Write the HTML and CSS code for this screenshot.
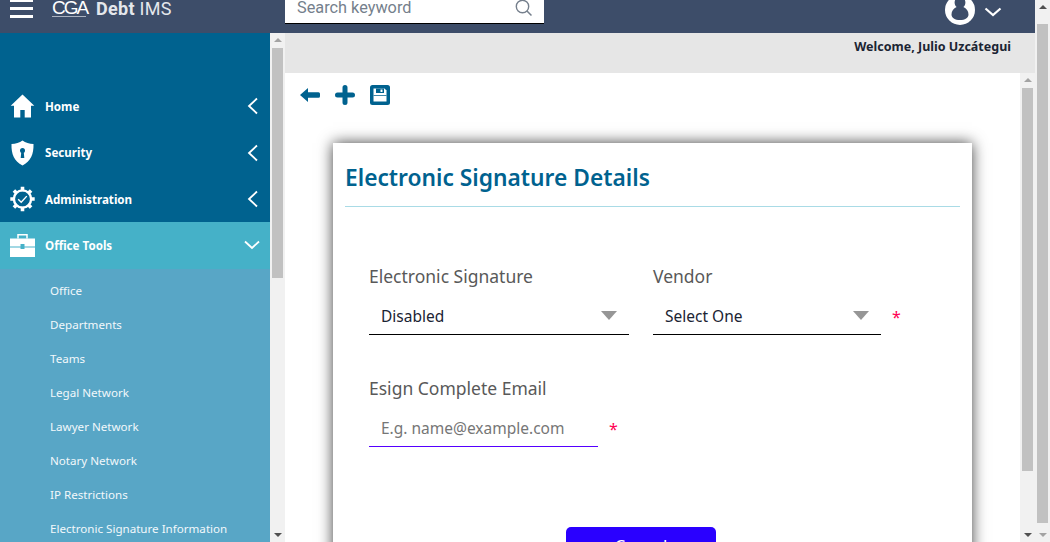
FILE: index.html
```html
<!DOCTYPE html>
<html>
<head>
<link rel="stylesheet" href="styles.css">
</head>
<body>

<div class="frame">
  <div class="app">
    <div class="topbar">
      <div class="burger"><span></span><span></span><span></span></div>
      <div class="logo">CGA<i class="logoline"></i></div>
      <div class="brand"><b>Debt</b> IMS</div>
      <div class="searchbox">
        <span class="searchtext">Search keyword</span>
        <svg class="searchicon" width="18" height="18" viewBox="0 0 18 18"><circle cx="7.500" cy="6.500" r="6.200" fill="none" stroke="#757f8c" stroke-width="1.400"/><path d="M12 11l4.500 4.500" stroke="#757f8c" stroke-width="1.500" fill="none"/></svg>
      </div>
      <div class="usermenu">
        <svg width="30" height="25" viewBox="0 0 30 25"><circle cx="15" cy="10" r="15" fill="#fff"/><path d="M15 -3c3.400 0 5.400 2.500 5.400 5.500 0 2-.9 3.600-2 4.600 3 1.300 5.100 4.200 5.100 7.400 0 3.500-3.500 5.500-8.500 5.500s-8.500-2-8.500-5.500c0-3.200 2.100-6.100 5.100-7.400-1.100-1-2-2.600-2-4.600 0-3 2-5.500 5.400-5.500z" fill="#3d4d69"/></svg>
        <svg class="userchevron" width="18" height="10" viewBox="0 0 18 10"><path d="M1.500 1.500L9 8l7.500-6.500" fill="none" stroke="#fff" stroke-width="2.200"/></svg>
      </div>
    </div>

    <div class="columns">
      <div class="sidebar">
        <div class="navitem">
          <svg class="navicon" width="25" height="26" viewBox="0 0 25 26"><path d="M12.500 1.500L.7 12.800h3.300V24.500h6.300v-7.500h4.400v7.500H21V12.800h3.300z" fill="#fff"/></svg>
          <span class="navlabel">Home</span>
          <svg class="navchevron" width="12" height="18" viewBox="0 0 12 18"><path d="M10 1.500L2 9l8 7.500" fill="none" stroke="#fff" stroke-width="1.800"/></svg>
        </div>
        <div class="navitem">
          <svg class="navicon" width="25" height="26" viewBox="0 0 25 26"><path d="M12.500 .5c3 2.200 6.800 3.400 11 3.600.3 10-2.700 17.600-11 21.400C4.200 21.700 1.200 14.100 1.500 4.100c4.200-.2 8-1.400 11-3.600z" fill="#fff"/><circle cx="12.500" cy="10.500" r="2.500" fill="#00628f"/><path d="M11.300 11.500h2.400l.6 6.500h-3.600z" fill="#00628f"/></svg>
          <span class="navlabel">Security</span>
          <svg class="navchevron" width="12" height="18" viewBox="0 0 12 18"><path d="M10 1.500L2 9l8 7.500" fill="none" stroke="#fff" stroke-width="1.800"/></svg>
        </div>
        <div class="navitem">
          <svg class="navicon" width="25" height="26" viewBox="0 0 25 26"><circle cx="12.500" cy="13" r="8.600" fill="none" stroke="#fff" stroke-width="2.400"/><path d="M12.500 .8v4.400M12.500 20.800v4.400M.3 13h4.400M20.300 13h4.400M3.900 4.400l3.100 3.100M18 18.500l3.100 3.100M21.100 4.400L18 7.500M7 18.500l-3.100 3.100" stroke="#fff" stroke-width="3.600"/><path d="M8.200 13.300l3 3 5.600-6.200" fill="none" stroke="#fff" stroke-width="1.400"/></svg>
          <span class="navlabel">Administration</span>
          <svg class="navchevron" width="12" height="18" viewBox="0 0 12 18"><path d="M10 1.500L2 9l8 7.500" fill="none" stroke="#fff" stroke-width="1.800"/></svg>
        </div>
        <div class="navitem navitem-open">
          <svg class="navicon" width="25" height="26" viewBox="0 0 25 26"><path d="M8 6.500V2.700h9v3.800" fill="none" stroke="#fff" stroke-width="1.500"/><path d="M0 6.500h25v8H14.500v-2.500h-4v2.500H0z" fill="#fff"/><path d="M0 15.500h10.500v1.500h4v-1.500H25V25H0z" fill="#fff"/></svg>
          <span class="navlabel">Office Tools</span>
          <svg width="16" height="10" viewBox="0 0 16 10"><path d="M1 1.500L8 8l7-6.500" fill="none" stroke="#fff" stroke-width="1.800"/></svg>
        </div>
        <div class="sublist">
          <div class="subitem">Office</div>
          <div class="subitem">Departments</div>
          <div class="subitem">Teams</div>
          <div class="subitem">Legal Network</div>
          <div class="subitem">Lawyer Network</div>
          <div class="subitem">Notary Network</div>
          <div class="subitem">IP Restrictions</div>
          <div class="subitem">Electronic Signature Information</div>
        </div>
      </div>
      <div class="scrollbar scrollbar-side">
        <i class="arrow-up arrow-light"></i>
        <i class="thumb thumb-side"></i>
        <i class="arrow-down"></i>
      </div>

      <div class="main">
        <div class="welcome">Welcome, Julio Uzcátegui</div>
        <div class="mainrow">
          <div class="pane">
            <div class="toolbar">
              <svg width="20" height="14" viewBox="0 0 20 14"><path d="M0 7l8-7v4.200h10.500a1.500 1.500 0 0 1 1.500 1.500v2.600a1.500 1.500 0 0 1-1.500 1.500H8V14z" fill="#00628f"/></svg>
              <svg width="20" height="20" viewBox="0 0 20 20"><path d="M7.500 2.500a2.500 2.500 0 0 1 5 0v5h5a2.500 2.500 0 0 1 0 5h-5v5a2.500 2.500 0 0 1-5 0v-5h-5a2.500 2.500 0 0 1 0-5h5z" fill="#00628f"/></svg>
              <svg width="20" height="20" viewBox="0 0 20 20"><rect width="20" height="20" rx="2.500" fill="#00628f"/><path d="M3.500 3.500h11l2 2v11h-13z" fill="#fff"/><path d="M6 3.500h8V8H6zM3.500 10h13v.8h-13z" fill="#00628f"/><rect x="10.500" y="4.500" width="2" height="2.500" fill="#fff"/></svg>
            </div>
            <div class="card">
              <h1 class="cardtitle">Electronic Signature Details</h1>
              <div class="formrow formrow-first">
                <div class="field field-signature">
                  <div class="fieldlabel">Electronic Signature</div>
                  <div class="select">
                    <span>Disabled</span><i class="caret"></i>
                  </div>
                </div>
                <div class="field field-vendor">
                  <div class="fieldlabel">Vendor</div>
                  <div class="select select-muted">
                    <span>Select One</span><i class="caret"></i>
                  </div>
                </div>
                <span class="req">*</span>
              </div>
              <div class="formrow">
                <div class="field field-email">
                  <div class="fieldlabel">Esign Complete Email</div>
                  <div class="select select-email">
                    <span>E.g. name@example.com</span>
                  </div>
                </div>
                <span class="req">*</span>
              </div>
              <div class="actions">
                <div class="cancelbtn">Cancel</div>
              </div>
            </div>
          </div>
          <div class="scrollbar scrollbar-pane">
            <i class="arrow-up arrow-light"></i>
            <i class="thumb thumb-pane"></i>
            <i class="arrow-down"></i>
          </div>
        </div>
      </div>
    </div>
  </div>

  <div class="scrollbar scrollbar-page">
    <i class="arrow-up"></i>
    <i class="thumb thumb-page"></i>
    <i class="arrow-down arrow-light"></i>
  </div>
</div>

</body>
</html>
```

FILE: styles.css
```css
html, body {
	margin: 0;
	height: 542px;
	overflow: hidden;
	background-color: #ffffff;
	font-family: "Noto Sans", "Open Sans", sans-serif;
}

.frame {
	display: flex;
	height: 542px;
	overflow: hidden;
}

.app {
	display: flex;
	flex-direction: column;
	width: 1035px;
	min-width: 0;
}

/* top bar */
.topbar {
	display: flex;
	align-items: flex-start;
	flex: 0 0 33px;
	height: 33px;
	background-color: #3d4d69;
	color: #ffffff;
}

.burger {
	display: flex;
	flex-direction: column;
	gap: 5px;
	width: 23px;
	margin-left: 10px;
	margin-top: -1px;
}

.burger span {
	display: block;
	height: 3px;
	background-color: #ffffff;
}

.logo {
	width: 35px;
	margin-left: 19px;
	padding-top: 1px;
	font-family: "Liberation Sans", sans-serif;
	font-size: 19px;
	line-height: 14px;
	letter-spacing: -2px;
	color: #ffffff;
}

.logoline {
	display: block;
	width: 34px;
	height: 1px;
	margin-top: 1px;
	background-color: #aab2c0;
}

.brand {
	margin-left: 9px;
	width: 189px;
	padding-top: 1px;
	font-family: Roboto, sans-serif;
	font-size: 18px;
	line-height: 16px;
	letter-spacing: .3px;
	color: #e4e7ec;
}

.brand b {
	font-weight: 700;
}

.searchbox {
	display: flex;
	justify-content: space-between;
	box-sizing: border-box;
	width: 259px;
	height: 24px;
	padding: 0 11px 0 12px;
	background-color: #ffffff;
	border-bottom: 1px solid #000000;
}

.searchtext {
	font-family: Roboto, sans-serif;
	font-size: 16.300px;
	line-height: 15px;
	color: #757f8c;
}

.usermenu {
	display: flex;
	align-items: flex-start;
	margin-left: 401px;
}

.userchevron {
	margin: 7px 0 0 9px;
}

/* below the bar */
.columns {
	display: flex;
	flex: 1;
	min-height: 0;
}

.sidebar {
	width: 270px;
	padding-top: 50.200px;
	overflow: hidden;
	background-color: #00628f;
	box-sizing: border-box;
}

.navitem {
	display: flex;
	align-items: center;
	height: 46.330px;
	padding: 0 11px 0 10px;
	color: #ffffff;
}

.navicon {
	flex: none;
}

.navlabel {
	flex: 1;
	margin-left: 10px;
	font-size: 11.600px;
	font-weight: 700;
}

.navitem-open {
	background-color: #45b1c8;
	padding-right: 10px;
}

.sublist {
	padding-top: 5.500px;
	background-color: #58a6c6;
	height: 300px;
}

.subitem {
	height: 34px;
	line-height: 34px;
	padding-left: 50px;
	font-size: 11.600px;
	color: #f2f8fb;
	white-space: nowrap;
}

/* hand drawn scrollbars, same look as the browser ones */
.scrollbar {
	display: flex;
	flex-direction: column;
	align-items: center;
	flex: 0 0 15px;
	width: 15px;
	box-sizing: border-box;
	background-color: #f1f1f1;
}

.thumb {
	display: block;
	width: 11px;
	background-color: #c1c1c1;
}

.arrow-up, .arrow-down {
	display: block;
	width: 0;
	height: 0;
	border-left: 4px solid transparent;
	border-right: 4px solid transparent;
}

.arrow-up {
	margin: 5px 0 6px;
	border-bottom: 4px solid #505050;
}

.arrow-down {
	margin-top: auto;
	margin-bottom: 5px;
	border-top: 4px solid #505050;
}

.arrow-up.arrow-light {
	border-bottom-color: #a3a3a3;
}

.arrow-down.arrow-light {
	border-top-color: #a3a3a3;
}

.thumb-side {
	height: 230px;
}

.thumb-pane {
	height: 383px;
}

.thumb-page {
	height: 499px;
	margin-top: 9px;
}

.main {
	display: flex;
	flex-direction: column;
	flex: 1;
	min-width: 0;
}

.welcome {
	flex: 0 0 40px;
	padding: 5px 24px 0 0;
	box-sizing: border-box;
	background-color: #e6e6e6;
	text-align: right;
	font-size: 12.500px;
	font-weight: 700;
	color: #1b2433;
}

.mainrow {
	display: flex;
	flex: 1;
	min-height: 0;
}

.pane {
	flex: 1;
	min-width: 0;
	overflow: hidden;
	padding: 0 48px;
}

.toolbar {
	display: flex;
	align-items: center;
	gap: 15px;
	height: 44px;
	margin-left: -33px;
}

.card {
	width: 639px;
	height: 500px;
	margin-top: 26px;
	padding: 0 12px;
	box-sizing: border-box;
	background-color: #ffffff;
	box-shadow: 0 0 14px rgba(0, 0, 0, .75);
}

.cardtitle {
	margin: 0;
	height: 64px;
	padding-top: 19px;
	box-sizing: border-box;
	border-bottom: 1px solid #a9dbe6;
	font-size: 22.750px;
	line-height: 32px;
	font-weight: 600;
	color: #00628f;
}

.formrow {
	display: flex;
	align-items: flex-end;
	margin-left: 24px;
	height: 112px;
}

.formrow-first {
	margin-top: 16px;
}

.field-signature {
	width: 260px;
	margin-right: 24px;
}

.field-vendor {
	width: 228px;
}

.field-email {
	width: 229px;
}

.fieldlabel {
	height: 39px;
	font-size: 17.500px;
	line-height: 24px;
	color: #595959;
}

.select {
	display: flex;
	align-items: center;
	justify-content: space-between;
	box-sizing: border-box;
	height: 32px;
	padding: 0 12px 6px 12px;
	border-bottom: 1px solid #000000;
	font-size: 15.500px;
	color: #1b2433;
}

.select-email {
	border-bottom-color: #5500ff;
	color: #767676;
}

.caret {
	display: block;
	width: 0;
	height: 0;
	border-left: 8.500px solid transparent;
	border-right: 8.500px solid transparent;
	border-top: 9px solid #969696;
}

.req {
	margin: 0 0 8px 11px;
	font-size: 16px;
	line-height: 20px;
	color: #ff0055;
}

.actions {
	display: flex;
	justify-content: center;
	padding: 80px 23px 0 0;
}

.cancelbtn {
	width: 150px;
	height: 44px;
	line-height: 38px;
	border-radius: 5px;
	background-color: #2a00ff;
	color: #ffffff;
	text-align: center;
	font-size: 17px;
}
```
